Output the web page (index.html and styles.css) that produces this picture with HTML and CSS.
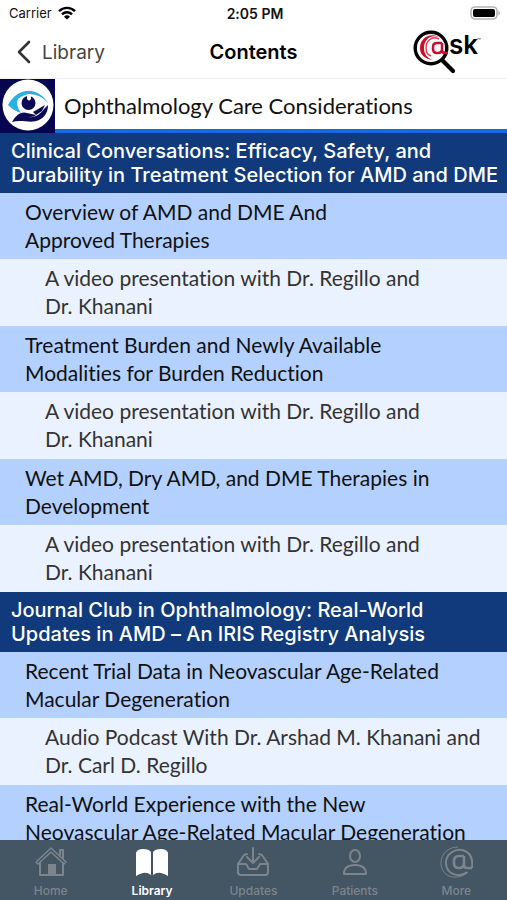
FILE: index.html
```html
<!DOCTYPE html>
<html lang="en">
	<head>
		<meta charset="utf-8">
		<meta name="viewport" content="width=device-width, initial-scale=1">
		<title>Contents</title>
		<link rel="stylesheet" href="styles.css">
	</head>
	<body>
		<header class="top">
			<div class="status">
				<div class="carrier">
					<span>Carrier</span>
					<svg width="18" height="14" viewBox="0 0 18 14" fill="none" stroke="#000" stroke-width="2.4">
						<path d="M1 5.2a11.4 11.4 0 0 1 16 0M4 8.3a7.2 7.2 0 0 1 10 0"/>
						<path d="M9 13.6L6 10.7a4.3 4.3 0 0 1 6 0z" fill="#000" stroke="none"/>
					</svg>
				</div>
				<span class="time">2:05 PM</span>
				<svg class="battery" width="31" height="14" viewBox="0 0 31 14">
					<rect x="1" y="1" width="26" height="12" rx="4" fill="#fff" stroke="#b4b4b4" stroke-width="1.6"/>
					<rect x="3" y="3" width="22" height="8" rx="2" fill="#000"/>
					<path d="M28.500 4.5q2.600 2.5 0 5z" fill="#999"/>
				</svg>
			</div>
			<nav class="navbar">
				<a class="back" href="#library">
					<svg width="14" height="24" viewBox="0 0 14 24" fill="none" stroke="#333" stroke-width="2.6" stroke-linecap="round" stroke-linejoin="round">
						<path d="M12 2L2 12l10 10"/>
					</svg>
					<span>Library</span>
				</a>
				<h1>Contents</h1>
				<a class="ask" href="#ask" aria-label="ask">
					<svg width="72" height="44" viewBox="0 0 72 44">
						<path d="M30 31l10 10" stroke="#000" stroke-width="4.2" stroke-linecap="round"/>
						<circle cx="18" cy="18" r="15.8" fill="#fff" stroke="#000" stroke-width="3.4"/>
						<path d="M26 7C17 2 7 8 7 18c0 7 5 11 13 12-6-2-9-6-9-12C11 9 18 4 26 7z" fill="#c8102e"/>
						<path d="M26 9C18 5 13 12 13 18c0 4 2 7 5 8" fill="none" stroke="#e23a50" stroke-width="1.4"/>
						<path d="M29 13h-5q-4 0-4 4v2q0 4 4 4h1q4 0 4-4v-6v7q0 3 3 3h3" fill="none" stroke="#c8102e" stroke-width="2.5"/>
						<text class="ask-name" x="36" y="24">sk</text>
						<text class="ask-mark" x="64" y="13">™</text>
					</svg>
				</a>
			</nav>
		</header>

		<div class="title-bar">
			<svg class="eye" width="55" height="54" viewBox="0 0 55 54">
				<rect width="55" height="54" fill="#07054f"/>
				<circle cx="28" cy="26" r="25.5" fill="#fff"/>
				<path d="M8 26C18 8 37 7 48 24C38 13 26 13 18 20q-3 5 3 14Q14 32 8 26z" fill="#2bb0e4"/>
				<circle cx="28.5" cy="24" r="7" fill="#0b0a55"/>
				<path d="M27 15h4v5q-2 3-4 0z" fill="#fff"/>
				<path d="M12 43c4-7 9-11 15-9l9 2c-2 2-5 2-8 2 8 1 12-3 16-8l4-4c0 7-3 12-9 15-8 4-17-1-27 2z" fill="#0b0a55"/>
				<path d="M33 33l12-7-3 6-6 4z" fill="#0b0a55"/>
			</svg>
			<h2>Ophthalmology Care Considerations</h2>
		</div>

		<main class="contents">
			<h3 class="section">Clinical Conversations: Efficacy, Safety, and<br>Durability in Treatment Selection for AMD and DME</h3>
			<a class="topic" href="#overview">Overview of AMD and DME And<br>Approved Therapies</a>
			<a class="detail" href="#overview-video">A video presentation with Dr. Regillo and<br>Dr. Khanani</a>
			<a class="topic" href="#burden">Treatment Burden and Newly Available<br>Modalities for Burden Reduction</a>
			<a class="detail" href="#burden-video">A video presentation with Dr. Regillo and<br>Dr. Khanani</a>
			<a class="topic" href="#therapies">Wet AMD, Dry AMD, and DME Therapies in<br>Development</a>
			<a class="detail" href="#therapies-video">A video presentation with Dr. Regillo and<br>Dr. Khanani</a>
			<h3 class="section">Journal Club in Ophthalmology: Real-World<br>Updates in AMD – An IRIS Registry Analysis</h3>
			<a class="topic" href="#trial">Recent Trial Data in Neovascular Age-Related<br>Macular Degeneration</a>
			<a class="detail" href="#trial-audio">Audio Podcast With Dr. Arshad M. Khanani and<br>Dr. Carl D. Regillo</a>
			<a class="topic" href="#experience">Real-World Experience with the New<br>Neovascular Age-Related Macular Degeneration</a>
		</main>

		<nav class="tabs">
			<a class="tab" href="#home">
				<svg width="34" height="32" viewBox="0 0 34 32" fill="none" stroke="currentColor" stroke-width="2" stroke-linejoin="round" stroke-linecap="round">
					<path d="M2 16L17 2l15 14-2 2L17 6 4 18z" stroke-width="1.5"/>
					<path d="M6 17v12h23V17M26 9V4h3v8"/>
					<path d="M14 29V18h8v11z" fill="currentColor" stroke="none"/>
				</svg>
				<span>Home</span>
			</a>
			<a class="tab active" href="#library">
				<svg width="34" height="32" viewBox="0 0 34 32" fill="currentColor">
					<path d="M1 7Q2 3 8 3t8 3v23q-4-3-8-2t-7 3zM18 6q2-3 8-3t7 4v23q-3-2-7-3t-8 2z"/>
				</svg>
				<span>Library</span>
			</a>
			<a class="tab" href="#updates">
				<svg width="34" height="32" viewBox="0 0 34 32" fill="none" stroke="currentColor" stroke-width="2" stroke-linejoin="round" stroke-linecap="round">
					<path d="M11 8L8 9 2 18v8q0 3 3 3h24q3 0 3-3v-8L26 9l-3-1"/>
					<path d="M2 18h8l3 5h8l3-5h8M17 2v15M11 11l6 6 6-6"/>
				</svg>
				<span>Updates</span>
			</a>
			<a class="tab" href="#patients">
				<svg width="34" height="32" viewBox="0 0 34 32" fill="none" stroke="currentColor" stroke-width="2" stroke-linejoin="round">
					<ellipse cx="17" cy="10" rx="5" ry="6"/>
					<path d="M6 28q0-9 11-9t11 9z"/>
				</svg>
				<span>Patients</span>
			</a>
			<a class="tab" href="#more">
				<svg width="34" height="32" viewBox="0 0 34 32" fill="none" stroke="currentColor">
					<path d="M28 26c-7 6-20 3-21-8C6 8 17 1 26 5c5 2 8 8 7 17" stroke-width="2"/>
					<path d="M19 1C9 1 2 8 2 17s7 15 15 14c5 0 9-2 12-5" stroke-width="1"/>
					<path d="M25 10h-5q-5 0-5 5v2q0 5 5 5t5-5v-7v9q0 3 3 3h5" stroke-width="2.6"/>
				</svg>
				<span>More</span>
			</a>
		</nav>
	</body>
</html>
```

FILE: styles.css
```css
* {
	box-sizing: border-box;
}
body {
	margin: 0;
	height: 100vh;
	display: flex;
	flex-direction: column;
	background: #fff;
	color: #111;
	font-family: "Inter", "Liberation Sans", sans-serif;
	font-variant-ligatures: none;
}
h1, h2, h3 {
	margin: 0;
	font-weight: 500;
}
a {
	color: inherit;
	text-decoration: none;
}
svg {
	display: block;
}
.top {
	border-bottom: 1px solid #eee;
}
.status {
	display: grid;
	grid-template-columns: 1fr auto 1fr;
	align-items: center;
	height: 26px;
	padding: 0 6px 0 9px;
	font-size: 13px;
}
.carrier {
	display: flex;
	align-items: center;
	gap: 6px;
}
.time {
	font-size: 14px;
	font-weight: 600;
}
.battery {
	justify-self: end;
}
.navbar {
	display: grid;
	grid-template-columns: 1fr auto 1fr;
	align-items: center;
	height: 52px;
	padding: 0 17px;
}
.navbar h1 {
	font-size: 20px;
	font-weight: 600;
	color: #000;
}
.back {
	display: flex;
	align-items: center;
	gap: 11px;
	font-size: 19px;
	color: #444;
}
.ask {
	justify-self: end;
	margin-right: 5px;
}
.ask-name {
	font-size: 26px;
	font-weight: 600;
}
.ask-mark {
	font-size: 6px;
}
.title-bar {
	display: flex;
	align-items: center;
	height: 54px;
	background: linear-gradient(#1668e3, #1668e3) bottom / 100% 4px no-repeat;
}
.title-bar h2 {
	padding: 0 0 2px 9px;
	font-family: "Lato", sans-serif;
	font-size: 22px;
	font-weight: 400;
}
.contents {
	flex: 1;
	min-height: 0;
	overflow-y: auto;
	scrollbar-width: none;
	white-space: nowrap;
}
.section {
	padding: 6px 11px;
	background: #103a7b;
	color: #fff;
	font-size: 20px;
	line-height: 24px;
}
.topic, .detail {
	display: block;
	font-family: "Lato", sans-serif;
	font-size: 21px;
	line-height: 28px;
}
.topic {
	padding: 5px 25px;
	background: #b3d0ff;
}
.detail {
	padding: 5px 25px 6px 45px;
	background: #ebf2ff;
	color: #333;
}
.tabs {
	display: grid;
	grid-template-columns: repeat(5, 1fr);
	height: 60px;
	padding-top: 6px;
	background: #445564;
	color: #7c858c;
}
.tab {
	display: flex;
	flex-direction: column;
	align-items: center;
	gap: 5px;
	font-size: 12px;
	font-weight: 500;
	line-height: 16px;
}
.active {
	color: #fff;
	font-weight: 600;
}
```
